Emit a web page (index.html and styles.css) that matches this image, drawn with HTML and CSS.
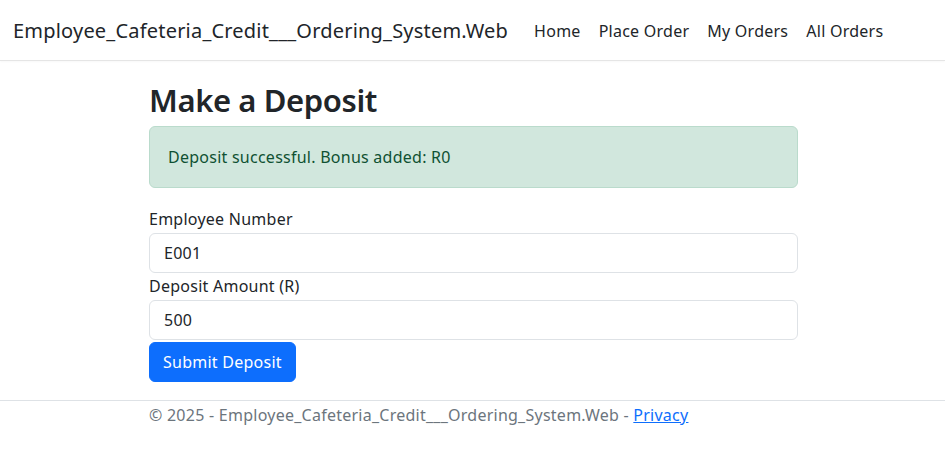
FILE: index.html
```html
<!DOCTYPE html>
<html lang="en">
<head>
<meta charset="utf-8">
<title>Make a Deposit</title>
<link rel="stylesheet" href="styles.css">
</head>
<body>
<header class="navbar">
  <a class="brand" href="#">Employee_Cafeteria_Credit___Ordering_System.Web</a>
  <nav class="nav">
    <a class="nav-link" href="#">Home</a>
    <a class="nav-link" href="#">Place Order</a>
    <a class="nav-link" href="#">My Orders</a>
    <a class="nav-link" href="#">All Orders</a>
  </nav>
</header>
<main class="main">
  <h1 class="title">Make a Deposit</h1>
  <div class="alert">Deposit successful. Bonus added: R0</div>
  <form class="form">
    <label class="label">Employee Number</label>
    <input class="input" type="text" value="E001">
    <label class="label">Deposit Amount (R)</label>
    <input class="input" type="text" value="500">
    <button class="btn" type="button">Submit Deposit</button>
  </form>
</main>
<footer class="footer">
  <div class="footer-inner">© 2025 - Employee_Cafeteria_Credit___Ordering_System.Web - <a class="link" href="#">Privacy</a></div>
</footer>
</body>
</html>
```
FILE: styles.css
```css
* { box-sizing: border-box; }
html, body { margin: 0; padding: 0; }
body {
  font-family: "Noto Sans", "Liberation Sans", sans-serif;
  font-size: 16px;
  line-height: 1.5;
  letter-spacing: 0.25px;
  color: #212529;
  background: #fff;
}
.navbar {
  height: 61px;
  border-bottom: 1px solid #e5e5e5;
  display: flex;
  align-items: center;
  padding: 2px 13px 0;
  box-shadow: 0 1px 2px rgba(0,0,0,0.03);
}
.brand {
  font-size: 20px;
  color: #212529;
  text-decoration: none;
  margin-right: 17px;
  letter-spacing: 0.2px;
}
.nav { display: flex; }
.nav-link {
  color: #212529;
  text-decoration: none;
  padding: 8px 9px;
  font-size: 16px;
}
.main {
  width: 649px;
  margin: 0 auto;
  padding-top: 21px;
  padding-bottom: 18px;
  position: relative;
  left: 1px;
}
.title {
  margin: 0 0 7px 0;
  font-size: 31px;
  font-weight: 600;
  line-height: 1.2;
  letter-spacing: -0.4px;
}
.alert {
  height: 62px;
  background: #d1e7dd;
  border: 1px solid #badbcc;
  color: #0f5132;
  border-radius: 6px;
  padding: 0 18px;
  display: flex;
  align-items: center;
  margin-bottom: 18px;
}
.form { display: flex; flex-direction: column; align-items: flex-start; }
.label { display: block; line-height: 27px; }
.input {
  width: 100%;
  height: 40px;
  border: 1px solid #dee2e6;
  border-radius: 6px;
  padding: 0 14px;
  font: inherit;
  letter-spacing: inherit;
  color: #212529;
}
.btn {
  margin-top: 2px;
  height: 40px;
  padding: 0 13px;
  background: #0d6efd;
  color: #fff;
  border: 1px solid #0d6efd;
  border-radius: 6px;
  font: inherit;
  letter-spacing: inherit;
}
.footer {
  border-top: 1px solid #dee2e6;
}
.footer-inner {
  width: 649px;
  margin: 0 auto;
  line-height: 28px;
  color: #6c757d;
  position: relative;
  left: 1px;
}
.link { color: #0d6efd; }
```
